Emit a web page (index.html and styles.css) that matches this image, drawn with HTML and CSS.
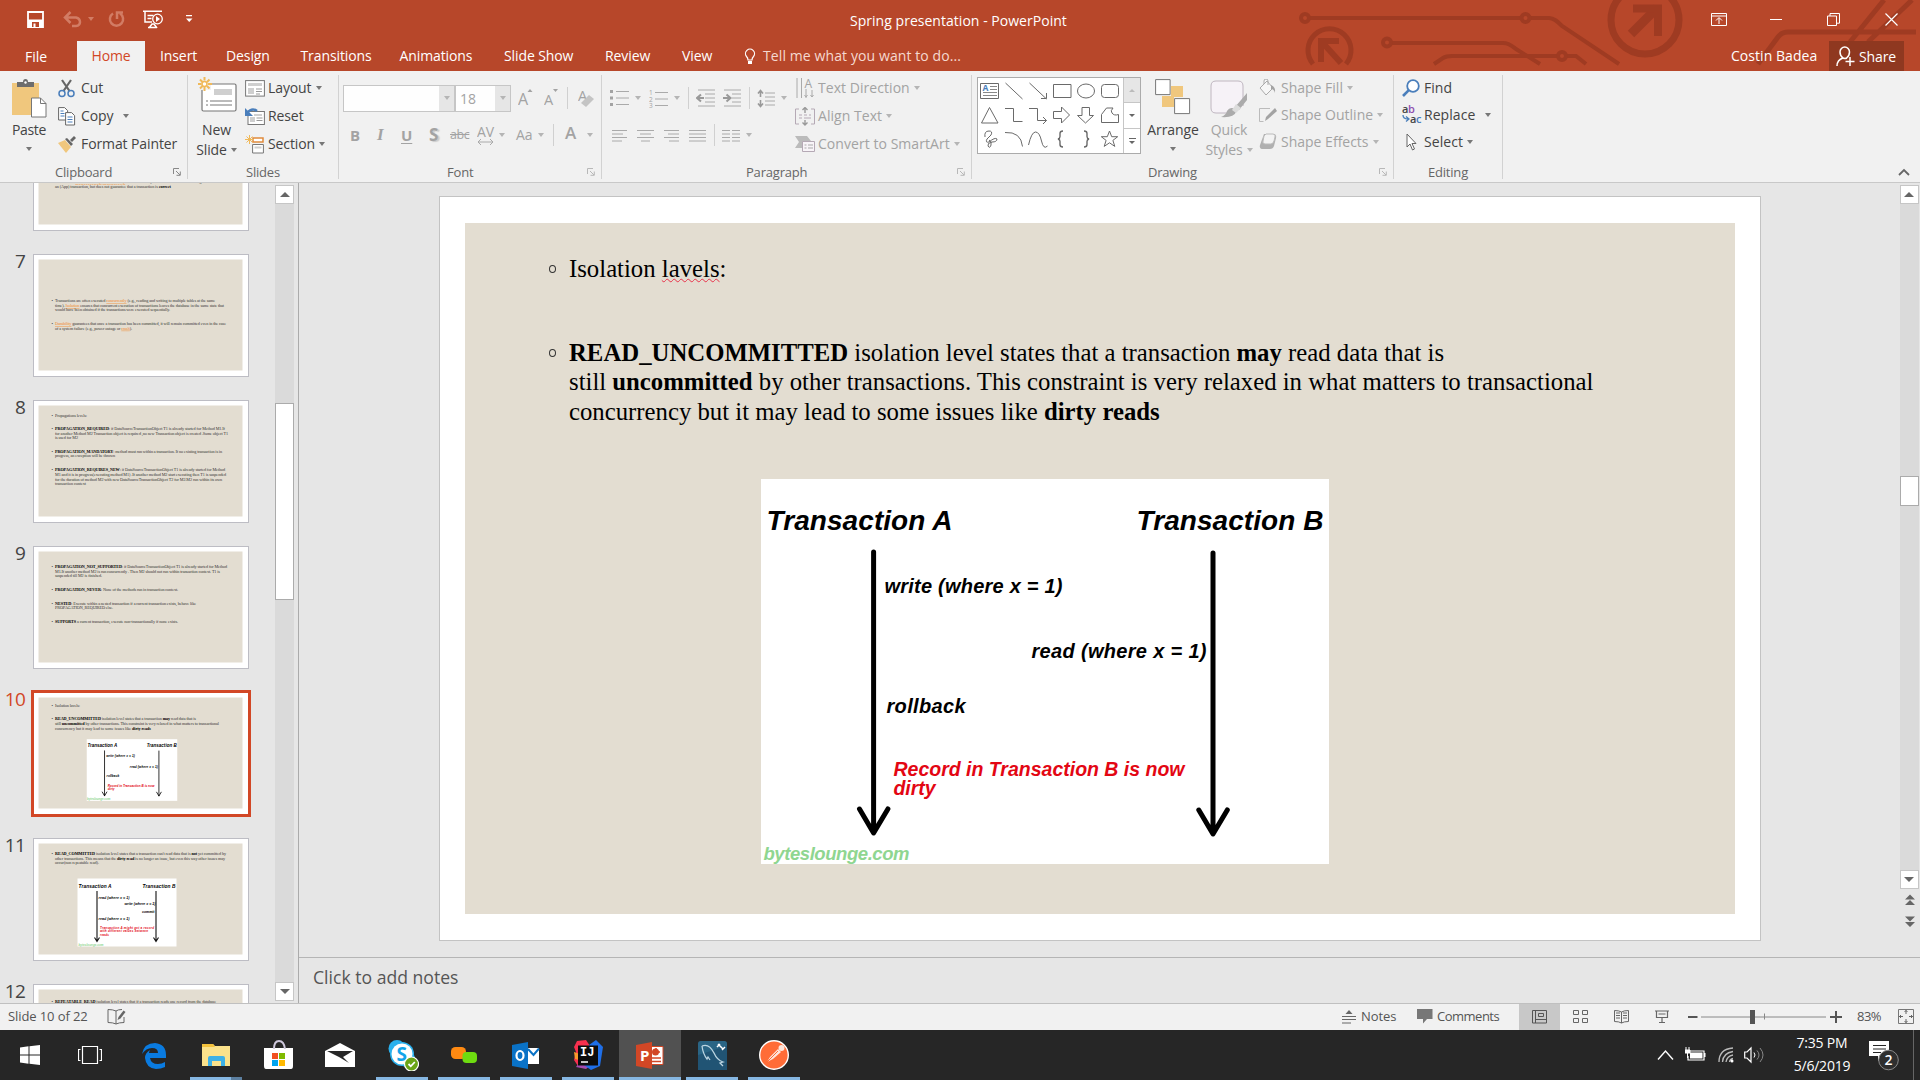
FILE: index.html
```html
<!DOCTYPE html>
<html lang="en">
<head>
<meta charset="utf-8">
<title>Spring presentation - PowerPoint</title>
<link rel="stylesheet" href="styles.css">
</head>
<body>
<svg class="defs" width="0" height="0">
  <defs>
    <symbol id="launcher" viewBox="0 0 8 8"><path d="M.5 6V.5H6M3 3l4 4M7.3 3.5v3.8H3.5" fill="none" stroke="currentColor"/></symbol>
    <symbol id="diagram" viewBox="0 0 568 385">
      <rect width="568" height="385" fill="#fff"/>
      <g fill="none" stroke="#000" stroke-width="5" stroke-linecap="round" stroke-linejoin="round">
        <path d="M112.6 73v280M98.5 330l14.1 24 14.3-24"/>
        <path d="M452 74v280M437.8 331l14.2 24 14.3-24"/>
      </g>
      <g class="dg">
        <text x="5.5" y="51" font-size="28" textLength="186">Transaction A</text>
        <text x="375.5" y="51" font-size="28" textLength="187">Transaction B</text>
        <text x="123.5" y="113.500" font-size="20" textLength="178">write (where x = 1)</text>
        <text x="270.5" y="179" font-size="20" textLength="175">read (where x = 1)</text>
        <text x="125.500" y="233.500" font-size="20" textLength="79">rollback</text>
        <text x="132.500" y="297" font-size="19.500" textLength="291" fill="#e30613">Record in Transaction B is now</text>
        <text x="132.500" y="315.500" font-size="19.500" textLength="42" fill="#e30613">dirty</text>
        <text x="2.500" y="381" font-size="18.500" textLength="146" fill="#8fd690">byteslounge.com</text>
      </g>
    </symbol>
  </defs>
</svg>
<div class="app">
  <header class="top">
    <svg class="circuit" width="660" height="71" viewBox="1260 0 660 71">
      <g fill="none" stroke="#9f3b22" stroke-width="4">
        <path d="M1310 18h212M1529 18h20c5 0 9 4 13 8l57 38M1391 43h112c6 0 9 3 13 6l24 15M1434 64l9-6c3-2 6-2 9-2h106M1566 56h10l10 8"/>
        <circle cx="1305" cy="18" r="4"/><circle cx="1525.500" cy="18" r="4"/><circle cx="1387" cy="42.500" r="4"/><circle cx="1562" cy="56" r="4"/>
        <path d="M1758 64l20-27c3-4 6-5 10-5h128M1850 42l34-42M1868 42l44-42" stroke-width="5"/>
        <path d="M1313 64a21.500 21.500 0 1 1 33 0" stroke-width="5"/>
        <circle cx="1645" cy="20" r="34" stroke-width="7"/>
        <path d="M1341 63l-19-21" stroke-width="6"/><path d="M1321 62V41h18" stroke-width="6"/>
        <path d="M1631 34l26-26" stroke-width="9"/><path d="M1633 8.500h25V36" stroke-width="8"/>
      </g>
    </svg>
    <div class="titlebar">
      <div class="qat">
        <svg width="17" height="17" viewBox="0 0 17 17"><path d="M1 1h15v15H1z" fill="none" stroke="#fff" stroke-width="1.800"/><path d="M1 8.500h15V16H1z" fill="#fff"/><path d="M5 11h7v5H5z" fill="#b7472a"/><path d="M6.500 12.500h2V16h-2z" fill="#fff"/></svg>
        <svg width="19" height="17" viewBox="0 0 19 17"><path d="M2 6.500h11q4 1 4 4.500t-4 4H9M7.500 1L2 6.500 7.500 12" fill="none" stroke="#d27c64" stroke-width="2.500"/></svg>
        <i class="caret pale"></i>
        <svg width="19" height="18" viewBox="0 0 19 18"><path d="M6 3.500a6.600 6.600 0 1 0 7 0M10 9V2.500h6" fill="none" stroke="#d27c64" stroke-width="2.500"/></svg>
        <svg width="21" height="19" viewBox="0 0 21 19"><path d="M0 1.200h19M2 2v10h7M4.500 5.500h6M4.500 8.500h4M6 18l3-4h2l3 4M5 17.500h8" fill="none" stroke="#fff" stroke-width="1.500"/><circle cx="14.500" cy="9" r="4.800" fill="#b7472a" stroke="#fff" stroke-width="1.300"/><path d="M13 6l4 3-4 3z" fill="#fff"/></svg>
        <svg width="7" height="8" viewBox="0 0 7 8"><path d="M0 0h6v1.200H0zM0 3.500h6.500L3.200 7z" fill="#fff"/></svg>
      </div>
      <div class="doc-title">Spring presentation - PowerPoint</div>
      <div class="winbtns">
        <svg width="17" height="13" viewBox="0 0 17 13"><path d="M.5.500h15v12H.5zM.5 3h15M8 11V5M5 7.500l3-3 3 3" fill="none" stroke="#fff"/></svg>
        <svg width="13" height="13" viewBox="0 0 13 13"><path d="M0 6.500h12" stroke="#fff"/></svg>
        <svg width="13" height="13" viewBox="0 0 13 13"><path d="M.5 3h9v9.500h-9zM3 3V.5h9.500v9.700h-3" fill="none" stroke="#fff"/></svg>
        <svg width="13" height="13" viewBox="0 0 13 13"><path d="M.5.500l12 12M12.500.500l-12 12" stroke="#fff" stroke-width="1.200"/></svg>
      </div>
    </div>
    <nav class="tabs">
      <span class="file">File</span><span class="tab-on">Home</span><span>Insert</span><span>Design</span><span>Transitions</span><span>Animations</span><span>Slide Show</span><span>Review</span><span>View</span>
      <svg width="12" height="17" viewBox="0 0 12 17"><path d="M4 12q0-2-1.500-3.500a4.500 4.500 0 1 1 7 0Q8 10 8 12z" fill="none" stroke="#fff" stroke-width="1.200"/><path d="M4 13h4v3H4z" fill="#fff"/></svg>
      <span class="tell">Tell me what you want to do...</span>
      <span class="user">Costin Badea</span>
      <span class="share"><svg width="19" height="21" viewBox="0 0 19 21"><path d="M1 20q0-6 6-8-3-2-3-6a4.700 5 0 0 1 9.500 0q0 4-3 6M7 12q2 1 4 0M14 11v9M9.500 15.500h9" fill="none" stroke="#fff" stroke-width="1.500"/></svg>Share</span>
    </nav>
  </header>

  <section class="ribbon">
    <div class="group g-clip">
      <div class="body">
        <div class="big b-paste">
          <svg width="35" height="39" viewBox="0 0 35 39"><path d="M0 4h27v32H0z" fill="#f0c77d"/><path d="M5 3h6q0-3 2.500-3T16 3h6v5H5z" fill="#6d6d6d"/><circle cx="13.500" cy="3.500" r="1.200" fill="#fff"/><path d="M19.500 19h9l5.500 5.500V38H19.500z" fill="#fff" stroke="#777"/><path d="M28.500 19v5.500H34" fill="none" stroke="#777"/></svg>
          <span>Paste</span><i class="caret"></i>
        </div>
        <div class="list">
          <div><svg width="17" height="19" viewBox="0 0 17 19"><path d="M4 1l7.500 11M13 1L5.500 12" stroke="#666" stroke-width="2.200"/><circle cx="4" cy="14.500" r="3" fill="none" stroke="#4a7ebb" stroke-width="1.500"/><circle cx="13" cy="14.500" r="3" fill="none" stroke="#4a7ebb" stroke-width="1.500"/></svg>Cut</div>
          <div><svg width="18" height="19" viewBox="0 0 18 19"><path d="M.6.600h6l3 3V13h-9z" fill="#fff" stroke="#666"/><path d="M2.500 4h3M2.500 6.500h4M2.500 9h4" stroke="#4a7ebb"/><path d="M7.600 5.600h6l3 3V18h-9z" fill="#fff" stroke="#666"/><path d="M9.500 10h5M9.500 12.500h5M9.500 15h5" stroke="#4a7ebb"/></svg>Copy<i class="caret m10"></i></div>
          <div><svg width="18" height="17" viewBox="0 0 18 17"><path d="M0 7l7-3 6 7-5 6z" fill="#f0c77d"/><path d="M7 3l2-1 6 6-2 2zM12 4l4-4 2 2-4 4z" fill="#666"/></svg>Format Painter</div>
        </div>
      </div>
      <div class="cap"><span>Clipboard</span><svg class="ln"><use href="#launcher"/></svg></div>
    </div>

    <div class="group g-slides">
      <div class="body">
        <div class="big b-new">
          <svg width="39" height="35" viewBox="0 0 39 35"><rect x="4" y="7" width="34" height="27" rx="1.500" fill="#fff" stroke="#777" stroke-width="1.200"/><path d="M16 12h18v6H16z" fill="#cfcfcf"/><path d="M8 24h2M12 24h22M8 28h2M12 28h22" stroke="#777"/><path d="M6 1h7v12H1V1z" fill="#f1f1f1"/><g stroke="#f0b95a" stroke-width="2"><path d="M6.500 0v3.500M6.500 10v4M0 7h3.500M10 7h4M2 2.500l2.500 2.500M9 9l2.500 2.500M11.500 2.500L9 5M4.500 9L2 11.500"/></g><circle cx="6.500" cy="7" r="2.500" fill="#fff" stroke="#f0b95a" stroke-width="1.500"/></svg>
          <span>New</span><span class="ln2">Slide<i class="caret"></i></span>
        </div>
        <div class="list">
          <div><svg width="20" height="17" viewBox="0 0 20 17"><rect x=".6" y=".6" width="18.800" height="15.500" fill="#fff" stroke="#777"/><path d="M3 3h14v3H3zM3 8h6v6H3z" fill="#cfcfcf"/><path d="M11 9h6M11 11.500h6M11 14h4" stroke="#999"/></svg>Layout<i class="caret m4"></i></div>
          <div><svg width="20" height="17" viewBox="0 0 20 17"><rect x="3" y="3.500" width="16.400" height="13" fill="#fff" stroke="#777"/><path d="M9 6h8v2H9zM5 9h5v5H5z" fill="#cfcfcf"/><path d="M11.500 10h6M11.500 12.500h6" stroke="#999"/><path d="M2 5q5-6 10-2" fill="none" stroke="#4a7ebb" stroke-width="2.400"/><path d="M0 0v8h8z" fill="#4a7ebb"/></svg>Reset</div>
          <div><svg width="20" height="19" viewBox="0 0 20 19"><path d="M8 3h10v4H8z" fill="#fff" stroke="#e08a3c" stroke-width="1.500"/><path d="M7.600 9.500h10.800v8.500H7.600z" fill="#fff" stroke="#777"/><path d="M9.500 11.500h7v2h-7z" fill="#cfcfcf"/><path d="M4.500 0v9M0 4.500h9M1.500 1.500l6 6M7.500 1.500l-6 6" stroke="#f0b95a"/></svg>Section<i class="caret m4"></i></div>
        </div>
      </div>
      <div class="cap"><span>Slides</span></div>
    </div>

    <div class="group g-font off">
      <div class="body rows">
        <div class="frow1">
          <div class="combo"><b></b><em><i class="caret"></i></em></div>
          <div class="combo"><b>18</b><em><i class="caret"></i></em></div>
          <svg width="16" height="20" viewBox="0 0 16 20"><text x="0" y="17" font-size="16">A</text><path d="M9.500 4l2.500-3 2.500 3z"/></svg>
          <svg width="16" height="20" viewBox="0 0 16 20"><text x="0" y="17" font-size="14.500">A</text><path d="M9 1l2.500 3L14 1z"/></svg>
          <i class="vr"></i>
          <svg width="17" height="20" viewBox="0 0 17 20"><text x="0" y="13" font-size="14.500">A</text><path d="M3 15l8-8 5 4-8 8z" fill="#c4c4c4"/></svg>
        </div>
        <div class="frow2">
          <span class="fb">B</span><span class="fi">I</span><span class="fu">U</span><span class="fs">S</span><span class="fx">abc</span>
          <svg width="19" height="20" viewBox="0 0 19 20"><text x="0" y="12" font-size="14" textLength="17">AV</text><path d="M1 17h15M4 14l-3 3 3 3M13 14l3 3-3 3" fill="none" stroke="#aaa"/></svg>
          <i class="caret"></i><span>Aa</span><i class="caret"></i><i class="vr"></i><span class="fa">A</span><i class="caret"></i>
        </div>
      </div>
      <div class="cap"><span>Font</span><svg class="ln"><use href="#launcher"/></svg></div>
    </div>

    <div class="group g-para off">
      <div class="body">
        <div class="rows p-left">
          <div class="prow1">
            <svg width="19" height="18" viewBox="0 0 19 18"><path d="M0 1h3v3H0zM0 7.500h3v3H0zM0 14h3v3H0z"/><path d="M6 2.500h13M6 9h13M6 15.500h13" stroke="#aaa"/></svg><i class="caret"></i>
            <svg width="19" height="19" viewBox="0 0 19 19"><text x="0" y="6" font-size="6.500">1</text><text x="0" y="12.500" font-size="6.500">2</text><text x="0" y="19" font-size="6.500">3</text><path d="M6 3.500h13M6 10h13M6 16.500h13" stroke="#aaa"/></svg><i class="caret"></i>
            <i class="vr"></i>
            <svg width="19" height="18" viewBox="0 0 19 18"><path d="M2 1h17M9 5h10M9 9h10M9 13h10M2 17h17" stroke="#aaa"/><path d="M1 9h7M5 5.500L1 9l4 3.500" fill="none" stroke="#999" stroke-width="2"/></svg>
            <svg width="19" height="18" viewBox="0 0 19 18"><path d="M1 1h17M9 5h9M9 9h9M9 13h9M1 17h17" stroke="#aaa"/><path d="M0 9h7M3.500 5.500L7.500 9l-4 3.500" fill="none" stroke="#999" stroke-width="2"/></svg>
            <i class="vr"></i>
            <svg width="18" height="19" viewBox="0 0 18 19"><path d="M3.500 2v6M3.500 11v6M1 4.500L3.500 1.500 6 4.500M1 14.500l2.500 3 2.500-3" fill="none" stroke="#999" stroke-width="1.600"/><path d="M8 4h10M8 8h10M8 12h10M8 16h10" stroke="#aaa"/></svg><i class="caret"></i>
          </div>
          <div class="prow2">
            <svg width="15" height="13" viewBox="0 0 15 13"><path d="M0 1.500h15M0 5h11M0 8.500h15M0 12h10" stroke="#aaa"/></svg>
            <svg width="17" height="13" viewBox="0 0 17 13"><path d="M0 1.500h17M3 5h11M0 8.500h17M4 12h9" stroke="#aaa"/></svg>
            <svg width="15" height="13" viewBox="0 0 15 13"><path d="M0 1.500h15M4 5h11M0 8.500h15M5 12h10" stroke="#aaa"/></svg>
            <svg width="17" height="13" viewBox="0 0 17 13"><path d="M0 1.500h17M0 5h17M0 8.500h17M0 12h17" stroke="#aaa"/></svg>
            <i class="vr"></i>
            <svg width="18" height="13" viewBox="0 0 18 13"><path d="M0 1.500h8M10 1.500h8M0 5h8M10 5h8M0 8.500h8M10 8.500h8M0 12h8M10 12h8" stroke="#aaa"/></svg><i class="caret"></i>
          </div>
        </div>
        <div class="list">
          <div><svg width="20" height="20" viewBox="0 0 20 20"><path d="M2 0v20M6.500 0v20M11 11v9M17 12v7M9.500 17l1.500 2 1.500-2M15.500 17l1.500 2 1.500-2" fill="none" stroke="#aaa"/><text x="9.500" y="10" font-size="12">A</text></svg>Text Direction<i class="caret m4"></i></div>
          <div><svg width="20" height="19" viewBox="0 0 20 19"><path d="M4 2H.5v15H4M16 2h3.500v15H16M4 8h3M9 8h3M14 8h2M4 11h3M9 11h7" fill="none" stroke="#b5a9b5"/><path d="M10 0v6M10 13v5M7.500 3L10 .5 12.500 3M7.500 15.500L10 18l2.500-2.500" fill="none" stroke="#999" stroke-width="1.400"/></svg>Align Text<i class="caret m4"></i></div>
          <div><svg width="20" height="17" viewBox="0 0 20 17"><path d="M0 0h12l4 5H8v7H0l4-6z" fill="#bbb"/><path d="M7.500 5.500h12v10h-12z" fill="#f8f4f8" stroke="#b5a9b5"/><path d="M9.500 9h2M13 9h5M9.500 12h2M13 12h5" stroke="#aaa"/></svg>Convert to SmartArt<i class="caret m4"></i></div>
        </div>
      </div>
      <div class="cap"><span>Paragraph</span><svg class="ln"><use href="#launcher"/></svg></div>
    </div>

    <div class="group g-draw">
      <div class="body">
        <div class="gallery">
          <svg width="146" height="74" viewBox="978 78 146 74" fill="none" stroke="#6a6a6a">
            <path d="M980.500 83.500h18v15h-18z"/><path d="M990 86.500h7M990 89.500h7M983 92.500h14M983 95.500h14" stroke="#888"/><text x="982.500" y="91" font-size="8.500" font-weight="700" fill="#4a7ebb" stroke="none">A</text>
            <path d="M1005.500 83l17 16M1029.500 83l17 16M1041 98.500h5.500V93M1053.500 84.500h17.500v13h-17.500z"/>
            <ellipse cx="1086" cy="91" rx="8.500" ry="7"/><rect x="1101.500" y="84.500" width="17" height="13" rx="3"/>
            <path d="M989.500 107.500l8.500 15.500h-16.500zM1005 108.500h8.500v13h9M1029 108.500h8.500v12h9M1043 117l3.500 3.500-3.500 3.500M1053.500 111.500h8v-4.500l8 8-8 8v-4.500h-8zM1082 107.500h7.500v8h4l-8 7.500-8-7.500h4.500zM1101.500 122.500v-8l5-6.500h6.500q-3 3-1 5 2 3 6.500 1.500v8z"/>
            <path d="M985 137q-1-6 4-6 4 0 2 4l-4 4q-2 4 2 3 6-5 8-3 0 3-5 3-5 1-4 4 2 3 3-1 1-4-2-5M1005 132.500q16-1 17.500 14M1028.500 145q3-13 7-13t6 9 6 5"/>
            <path d="M1063 131q-3 0-3 2.500v3q0 2-2 2.500 2 .5 2 2.500v3q0 2.500 3 2.500M1084 131q3 0 3 2.500v3q0 2 2 2.500-2 .5-2 2.500v3q0 2.500-3 2.500" stroke-width="1.400"/>
            <path d="M1109.500 131l2.200 5.700h6l-4.800 3.700 1.900 6-5.300-3.600-5.300 3.600 1.900-6-4.800-3.700h6z"/>
          </svg>
          <div class="gscroll"><i><u class="up pale2"></u></i><i><u class="dn"></u></i><i><s></s><u class="dn"></u></i></div>
        </div>
        <div class="big b-arr">
          <svg width="36" height="37" viewBox="0 0 36 37"><path d="M16 8h12v11H16zM7 18h12v11H7z" fill="#f0c77d"/><path d="M.6 1.600h14.500v15H.6zM19.600 20.600h15v15h-15z" fill="#fff" stroke="#777"/></svg>
          <span>Arrange</span><i class="caret"></i>
        </div>
        <div class="big b-quick off">
          <svg width="38" height="38" viewBox="0 0 38 38"><path d="M24 33H6q-5 0-5-5V6q0-5 5-5h22q5 0 5 5v20" fill="#f6f2f7" stroke="#bfb6c0"/><path d="M37 13v7l-8 10-4-3zM11 37q5-2 6-6 3-5 8-2l1 3q-2 6-15 5z" fill="#ababab"/><path d="M22 30l4-6 5 4-5 5z" fill="#dcdcdc"/></svg>
          <span>Quick</span><span class="ln2">Styles<i class="caret"></i></span>
        </div>
        <div class="list off l27">
          <div><svg width="17" height="18" viewBox="0 0 17 18"><path d="M1 9l7-7 6 7-7 7zM5 5V2q0-2 2-2t2 2v4" fill="#f6f6f6" stroke="#aaa"/><path d="M12 6q5 2 4 8-1-4-4-4z"/></svg>Shape Fill<i class="caret m4"></i></div>
          <div><svg width="19" height="16" viewBox="0 0 19 16"><path d="M11 1.500H.5v13h4" fill="none" stroke="#bbb"/><path d="M6 14l1-4 9-9 2 3-9 8z"/></svg>Shape Outline<i class="caret m4"></i></div>
          <div><svg width="18" height="17" viewBox="0 0 18 17"><path d="M5 1h9q4 0 3 4l-2 8q-1 3-4 3H4q-4 0-3-4z" fill="#b0b0b0"/><path d="M7 1h7q3 0 2 3l-1 4q-1 3-3 3H6q-3 0-2-3l1-5z" fill="#f3f3f3" stroke="#bbb"/></svg>Shape Effects<i class="caret m4"></i></div>
        </div>
      </div>
      <div class="cap"><span>Drawing</span><svg class="ln pale-ln"><use href="#launcher"/></svg></div>
    </div>

    <div class="group g-edit">
      <div class="body">
        <div class="list l27">
          <div><svg width="19" height="18" viewBox="0 0 19 18"><circle cx="11" cy="7" r="5.800" fill="#fff" stroke="#4a7ebb" stroke-width="1.800"/><path d="M6.800 11.200L1 17" stroke="#4a7ebb" stroke-width="2.600"/></svg>Find</div>
          <div><svg width="20" height="19" viewBox="0 0 20 19"><g font-weight="600"><text x="0" y="8" font-size="11" fill="#444">a</text><text x="6" y="8" font-size="11" fill="#8f4fb0">b</text><text x="8" y="18" font-size="11" fill="#444">a</text><text x="14" y="18" font-size="11" fill="#4a7ebb">c</text></g><path d="M1 10q0 4 5 4M4 11.500L7 14l-3 2.500" fill="none" stroke="#4a7ebb" stroke-width="1.300"/></svg>Replace<i class="caret m10"></i></div>
          <div><svg width="17" height="18" viewBox="0 0 17 18"><path d="M5 1v13l3-3 2.500 6 2-1L10 10.500h4z" fill="#fff" stroke="#666"/></svg>Select<i class="caret m4"></i></div>
        </div>
      </div>
      <div class="cap"><span>Editing</span></div>
    </div>
    <svg class="collapse" width="12" height="8" viewBox="0 0 12 8"><path d="M1 7l5-5 5 5" fill="none" stroke="#666" stroke-width="1.800"/></svg>
  </section>

  <main class="work">
    <aside class="pane">
      <ol class="thumbs">
        <li><span></span><svg viewBox="0 0 216 123"><rect class="pg" x="5.500" y="5.500" width="204" height="111"/>
          <text x="22" y="75" textLength="175">and then <tspan class="hl">Consistency Durability</tspan> ensures any transaction will bring the database</text><text x="22" y="80" textLength="116">an (App) transaction, but does not guarantee that a transaction is <tspan class="bd">correct</tspan></text></svg></li>
        <li><span>7</span><svg viewBox="0 0 216 123"><rect class="pg" x="5.500" y="5.500" width="204" height="111"/>
          <text x="18.500" y="48">•</text><text x="22" y="48" textLength="160">Transactions are often executed <tspan class="hl">concurrently</tspan> (e.g., reading and writing to multiple tables at the same</text><text x="22" y="53" textLength="169">time). <tspan class="hl">Isolation</tspan> ensures that concurrent execution of transactions leaves the database in the same state that</text><text x="22" y="57" textLength="115">would have been obtained if the transactions were executed sequentially.</text>
          <text x="18.500" y="71">•</text><text x="22" y="71" textLength="171"><tspan class="hl">Durability</tspan> guarantees that once a transaction has been committed, it will remain committed even in the case</text><text x="22" y="75.700" textLength="77">of a system failure (e.g., power outage or <tspan class="hl">crash</tspan>).</text></svg></li>
        <li><span>8</span><svg viewBox="0 0 216 123"><rect class="pg" x="5.500" y="5.500" width="204" height="111"/>
          <text x="18.500" y="17">•</text><text x="22" y="17" textLength="32">Propagations levels:</text>
          <text x="18.500" y="30">•</text><text x="22" y="30" textLength="170"><tspan class="bd">PROPAGATION_REQUIRED</tspan>: if DataSourceTransactionObject T1 is already started for Method M1.If</text><text x="22" y="34.700" textLength="173">for another Method M2 Transaction object is required ,no new Transaction object is created .Same object T1</text><text x="22" y="38.700" textLength="23">is used for M2</text>
          <text x="18.500" y="53">•</text><text x="22" y="53" textLength="167"><tspan class="bd">PROPAGATION_MANDATORY</tspan>: method must run within a transaction. If no existing transaction is in</text><text x="22" y="57" textLength="60">progress, an exception will be thrown</text>
          <text x="18.500" y="71">•</text><text x="22" y="71" textLength="170"><tspan class="bd">PROPAGATION_REQUIRES_NEW</tspan>: if DataSourceTransactionObject T1 is already started for Method</text><text x="22" y="76" textLength="171">M1 and it is in progress(executing method M1) .If another method M2 start executing then T1 is suspended</text><text x="22" y="80.700" textLength="167">for the duration of method M2 with new DataSourceTransactionObject T2 for M2.M2 run within its own</text><text x="22" y="84.700" textLength="31">transaction context</text></svg></li>
        <li><span>9</span><svg viewBox="0 0 216 123"><rect class="pg" x="5.500" y="5.500" width="204" height="111"/>
          <text x="18.500" y="21.700">•</text><text x="22" y="21.700" textLength="172"><tspan class="bd">PROPAGATION_NOT_SUPPORTED</tspan>: if DataSourceTransactionObject T1 is already started for Method</text><text x="22" y="26.700" textLength="165">M1.If another method M2 is run concurrently . Then M2 should not run within transaction context. T1 is</text><text x="22" y="30.700" textLength="47">suspended till M2 is finished.</text>
          <text x="18.500" y="45">•</text><text x="22" y="45" textLength="123"><tspan class="bd">PROPAGATION_NEVER</tspan>: None of the methods run in transaction context.</text>
          <text x="18.500" y="59">•</text><text x="22" y="59" textLength="141"><tspan class="bd">NESTED</tspan>: Execute within a nested transaction if a current transaction exists, behave like</text><text x="22" y="63" textLength="58">PROPAGATION_REQUIRED else.</text>
          <text x="18.500" y="77">•</text><text x="22" y="77" textLength="123"><tspan class="bd">SUPPORTS</tspan> a current transaction, execute non-transactionally if none exists.</text></svg></li>
        <li class="sel"><span>10</span><svg viewBox="0 0 216 123"><rect class="pg" x="5.500" y="5.500" width="204" height="111"/>
          <text x="18.500" y="14.700">•</text><text x="22" y="14.700" textLength="25">Isolation lavels:</text>
          <text x="18.500" y="27.700">•</text><text x="22" y="27.700" textLength="141"><tspan class="bd">READ_UNCOMMITTED</tspan> isolation level states that a transaction <tspan class="bd">may</tspan> read data that is</text><text x="22" y="32.700" textLength="164">still <tspan class="bd">uncommitted</tspan> by other transactions. This constraint is very relaxed in what matters to transactional</text><text x="22" y="38" textLength="96">concurrency but it may lead to some issues like <tspan class="bd">dirty reads</tspan></text>
          <use href="#diagram" x="53.500" y="47" width="91" height="62"/></svg></li>
        <li><span>11</span><svg viewBox="0 0 216 123"><rect class="pg" x="5.500" y="5.500" width="204" height="111"/>
          <text x="18.500" y="17">•</text><text x="22" y="17" textLength="171"><tspan class="bd">READ_COMMITTED</tspan> isolation level states that a transaction can't read data that is <tspan class="bd">not</tspan> yet committed by</text><text x="22" y="22" textLength="170">other transactions. This means that the <tspan class="bd">dirty read</tspan> is no longer an issue, but even this way other issues may</text><text x="22" y="26" textLength="44">occur(non repeatable read).</text>
          <rect x="44.500" y="40.500" width="99" height="68" fill="#fff"/>
          <path d="M64 53v50M61.500 99.500l2.500 4 2.500-4M123 53v50M120.500 99.500l2.500 4 2.500-4" fill="none" stroke="#111" stroke-width="1.100"/>
          <g class="dg"><text x="45.500" y="49.500" font-size="4.800" textLength="33">Transaction A</text><text x="109.500" y="49.500" font-size="4.800" textLength="33">Transaction B</text><text x="65.500" y="60.500" font-size="3.600" textLength="31">read (where x = 1)</text><text x="91.500" y="67" font-size="3.600" textLength="31">write (where x = 1)</text><text x="109" y="74.500" font-size="3.600" textLength="12.500">commit</text><text x="65.500" y="82" font-size="3.600" textLength="31">read (where x = 1)</text>
          <g fill="#e30613"><text x="67" y="90.500" font-size="3" textLength="54">Transaction A might get a record</text><text x="67" y="94.200" font-size="3" textLength="48">with different values between</text><text x="67" y="97.900" font-size="3" textLength="9">reads</text></g><text x="45.500" y="107.700" font-size="3" textLength="25" fill="#8fd690">byteslounge.com</text></g></svg></li>
        <li><span>12</span><svg viewBox="0 0 216 123"><rect class="pg" x="5.500" y="5.500" width="204" height="111"/><text x="18.500" y="18.700">•</text><text x="22" y="18.700" textLength="161"><tspan class="bd">REPEATABLE_READ</tspan> isolation level states that if a transaction reads one record from the database</text></svg></li>
      </ol>
      <div class="sbar"><b><u class="up"></u></b><div class="track t-left"><em></em></div><b><u class="dn"></u></b></div>
    </aside>
    <div class="right">
      <div class="stage">
        <article class="slide">
          <div class="page">
            <ul>
              <li>Isolation <span class="wavy">lavels</span>:</li>
              <li class="p2"><strong>READ_UNCOMMITTED</strong> isolation level states that a transaction <strong>may</strong> read data that is<br>still <strong>uncommitted</strong> by other transactions. This constraint is very relaxed in what matters to transactional<br>concurrency but it may lead to some issues like <strong>dirty reads</strong></li>
            </ul>
            <svg class="figure" width="568" height="385"><use href="#diagram"/></svg>
          </div>
        </article>
        <div class="vscroll">
          <div class="sbar"><b><u class="up"></u></b><div class="track t-main"><em></em></div><b><u class="dn"></u></b></div>
          <svg width="12" height="12" viewBox="0 0 12 12"><path d="M1 5.500L6 .5l5 5zM1 11l5-5 5 5z" fill="#666"/></svg>
          <svg width="12" height="12" viewBox="0 0 12 12"><path d="M1 .500h10l-5 5zM1 6h10l-5 5z" fill="#666"/></svg>
        </div>
      </div>
      <div class="notes">Click to add notes</div>
    </div>
  </main>

  <footer class="status">
    <span class="s-slide">Slide 10 of 22</span>
    <svg width="19" height="18" viewBox="0 0 19 18"><path d="M9 3Q6 1.500 1 1.500v13q5 0 8 1.500zM9 3q2-1.500 6-1.500M9 16q3-1.500 8-1.500V9" fill="none" stroke="#666"/><path d="M10.500 12l1-3L16.500 2.500l2 1.500-5 6.500z" fill="#666"/></svg>
    <svg class="s-ni" width="14" height="14" viewBox="0 0 14 14"><path d="M3.500 4L7 0l3.500 4z" fill="#666"/><path d="M0 6.500h14M0 9.500h14M0 13h9" stroke="#666" stroke-width="1.200"/></svg>
    <span>Notes</span>
    <svg width="16" height="15" viewBox="0 0 16 15"><path d="M0 0h15.500v10H10l-4 4.500V10H0z" fill="#777"/></svg>
    <span class="s-com">Comments</span>
    <div class="view-on"><svg width="15" height="14" viewBox="0 0 15 14"><path d="M.5.500h14v12.500H.5zM3.500.500v12.500M3.500 9.500h11M6.500 3.500h5v3h-5z" fill="none" stroke="#555"/></svg></div>
    <svg width="15" height="14" viewBox="0 0 15 14"><path d="M.5.500h5v4h-5zM9.500.500h5v4h-5zM.5 8.500h5v4h-5zM9.500 8.500h5v4h-5z" fill="none" stroke="#666"/></svg>
    <svg width="15" height="14" viewBox="0 0 15 14"><path d="M7.500 2Q5 .5.500.500v11q4.500 0 7 1.500 2.500-1.500 7-1.500V.5q-4.500 0-7 1.500zM7.500 2v11M2 3h4M2 5.500h4M2 8h4M9 3h4M9 5.500h4M9 8h4" fill="none" stroke="#666"/></svg>
    <svg width="14" height="14" viewBox="0 0 14 14"><path d="M0 1h14M1.500 1v6.500h11V1M7 8v4M4 12.500h6M3.500 4h7" fill="none" stroke="#666" stroke-width="1.200"/></svg>
    <svg width="10" height="14" viewBox="0 0 10 14"><path d="M0 7h9.500" stroke="#555" stroke-width="2"/></svg>
    <svg width="126" height="16" viewBox="0 0 126 16"><path d="M0 8h125M63.500 4.500v6" stroke="#888"/><path d="M49 1h5v14h-5z" fill="#555"/></svg>
    <svg width="12" height="14" viewBox="0 0 12 14"><path d="M0 7h12M6 1v12" stroke="#555" stroke-width="2"/></svg>
    <span class="s-z">83%</span>
    <svg width="16" height="17" viewBox="0 0 16 17"><path d="M.5 1.500h15v14H.5z" fill="none" stroke="#777"/><path d="M8 2v4M8 11v4M1 8.500h4M11 8.500h4M6.500 4L8 2.500 9.500 4M6.500 13L8 14.500 9.500 13M3 7L1.500 8.500 3 10M13 7l1.500 1.500L13 10" fill="none" stroke="#666"/></svg>
  </footer>

  <footer class="taskbar">
    <div class="tk w60"><svg width="20" height="20" viewBox="0 0 20 20"><path d="M0 2.500L8.500 1.300V9.500H0zM9.500 1.200L20 0v9.500H9.500zM0 10.500h8.500v8.200L0 17.500zM9.500 10.500H20V20L9.500 18.800z" fill="#fff"/></svg></div>
    <div class="tk w63"><svg width="24" height="18" viewBox="0 0 24 18"><path d="M4.500.500h15v17h-15zM2.500 3.500H.5v11h2M21.500 3.500h2v11h-2" fill="none" stroke="#fff" stroke-width="1.200"/></svg></div>
    <div class="tk"><svg width="26" height="27" viewBox="0 0 26 27"><path d="M1 12Q3 1 14 1q11 1 11 12v3H9q1 6 8 6 4 0 7-2v5q-4 2-9 2-10-1-11-11 0-5 5-8-1 2-1 3h9q0-5-6-5Q5 6 1 12z" fill="#0a7be0"/></svg></div>
    <div class="tk run two"><svg width="28" height="24" viewBox="0 0 28 24"><path d="M0 1h11l2 2h15v20H0z" fill="#fbe28b"/><path d="M0 1h11l2 3H0z" fill="#f4c23c"/><path d="M6 23v-8q0-2 2-2h13q2 0 2 2v8h-4v-5h-9v5z" fill="#3eb1e6"/></svg></div>
    <div class="tk"><svg width="29" height="30" viewBox="0 0 29 30"><path d="M0 8h29v18q0 3-2 3H2q-2 0-2-3z" fill="#fff"/><path d="M10 9q0-8 5-8t6 8" fill="none" stroke="#cfc8dc" stroke-width="2"/><path d="M8 13h6v6H8z" fill="#f25022"/><path d="M15 13h6v6h-6z" fill="#7fba00"/><path d="M8 20h6v6H8z" fill="#00a4ef"/><path d="M15 20h6v6h-6z" fill="#ffb900"/></svg></div>
    <div class="tk"><svg width="30" height="24" viewBox="0 0 30 24"><path d="M0 8L15 0l15 8v16H0z" fill="#fff"/><path d="M2 8h26l-10 6 6 6-10-6z" fill="#262626"/></svg></div>
    <div class="tk run"><svg class="nudge" width="31" height="31" viewBox="0 0 31 31"><circle cx="9" cy="8.500" r="8.500" fill="#2ab1ee"/><circle cx="19" cy="19" r="8" fill="#2ab1ee"/><circle cx="14" cy="14" r="12" fill="#2ab1ee"/><circle cx="14" cy="14" r="10.500" fill="#fff"/><text x="8.500" y="21" font-size="19" font-weight="700" fill="#12a5ea">S</text><circle cx="23.500" cy="24" r="7" fill="#6aa516" stroke="#fff" stroke-width="1.200"/><path d="M20.500 24l2.300 2.300 4-4.300" fill="none" stroke="#fff" stroke-width="1.800"/></svg></div>
    <div class="tk run"><svg width="28" height="18" viewBox="0 0 28 18"><rect x="1" y="1" width="15" height="12" rx="4.500" fill="#ff8a12"/><rect x="12.500" y="6" width="14.500" height="11" rx="4" fill="#6edc10"/></svg></div>
    <div class="tk run"><svg width="28" height="27" viewBox="0 0 28 27"><path d="M15 6h12v16H15z" fill="#fff"/><path d="M16 7l5.500 6L27 6.500" fill="none" stroke="#0a72c6" stroke-width="2"/><path d="M0 3l16-3v27L0 24z" fill="#0a72c6"/><ellipse cx="8" cy="13.500" rx="3.500" ry="4.500" fill="none" stroke="#fff" stroke-width="2.200"/></svg></div>
    <div class="tk run"><svg width="30" height="30" viewBox="0 0 30 30"><path d="M4 1l9-1 4 6-12 20-4-6 2-8-2-5z" fill="#f7304e"/><path d="M1 12l6 2-1 6-4-1z" fill="#fb9a2c"/><path d="M3 27l6-8 8 7-4 3z" fill="#a44bb0"/><path d="M16 5l7-5 7 7-3 19-9 4-7-5z" fill="#1f6fe8"/><path d="M5 5.500h20v20H5z" fill="#0c0c0c"/><text class="mono" x="7" y="16" font-size="12" font-weight="700" fill="#fff">IJ</text><path d="M8 22h7" stroke="#fff" stroke-width="1.500"/></svg></div>
    <div class="tk run act"><svg width="28" height="27" viewBox="0 0 28 27"><path d="M14 4.500h13v18H14z" fill="#fff" stroke="#d24726"/><circle cx="19.500" cy="10" r="3.500" fill="#d24726"/><path d="M20 6v4h4M16 16h9M16 19.500h9" stroke="#d24726" stroke-width="1.500" fill="none"/><path d="M0 3l16-3v27L0 24z" fill="#d24726"/><text x="4" y="19" font-size="15" font-weight="700" fill="#fff">P</text></svg></div>
    <div class="tk run"><svg width="29" height="29" viewBox="0 0 29 29"><rect width="29" height="29" rx="2.500" fill="#2a6585"/><path d="M0 14L29 5v24H0z" fill="#215474"/><path d="M4 5q7-3 12 7 3 7 9 9l-3 1 3 3M4 5q1 8 5 13l1-2 2 3" fill="none" stroke="#bcd5e2" stroke-width="1.300"/><path d="M20 3l5 5M19 6l3-3M24 9l3-3" stroke="#fff" stroke-width="1.500"/></svg></div>
    <div class="tk run"><svg width="30" height="30" viewBox="0 0 30 30"><circle cx="15" cy="15" r="14.300" fill="#ff6c37" stroke="#fff" stroke-width="1.400"/><circle cx="22.500" cy="8" r="3" fill="#fde6dc"/><path d="M8 22l3-5 8-8 3 3-8 7z" fill="#fde6dc"/><path d="M8 22L19 11" stroke="#ff6c37"/></svg></div>
    <div class="tray">
      <svg width="17" height="12" viewBox="0 0 17 12"><path d="M1 10.500l7.500-8.500 7.500 8.500" fill="none" stroke="#fff" stroke-width="1.400"/></svg>
      <svg width="21" height="16" viewBox="0 0 21 16"><path d="M5 4h14v9H3V9" fill="none" stroke="#fff" stroke-width="1.200"/><path d="M5 5.500h12.500v6H5zM19 6h1.500v4H19z" fill="#fff"/><path d="M1 0v3M4 0v3M0 3h5v3H0zM2.500 6v5" stroke="#fff" fill="#fff"/></svg>
      <svg width="16" height="16" viewBox="0 0 16 16"><path d="M1 15Q1 2 15 1M4.500 15Q5 6 15 4.500M8 15q1-6 7-7M11.500 15q.5-3 3.500-3.500" fill="none" stroke="#bbb" stroke-width="1.300"/><circle cx="14" cy="14" r="1.500" fill="#fff"/></svg>
      <svg width="22" height="18" viewBox="0 0 22 18"><path d="M.7 6H3l4-4v14l-4-4H.7z" fill="none" stroke="#fff" stroke-width="1.200"/><path d="M10 6.500q2 2.500 0 5" fill="none" stroke="#fff"/><path d="M13 4.500q4 4.500 0 9M16 2q6 7 0 14" fill="none" stroke="#888"/></svg>
      <div class="clock"><span>7:35 PM</span><span>5/6/2019</span></div>
      <svg width="32" height="32" viewBox="0 0 32 32"><path d="M0 2h20v15h-6l-5 5v-5H0z" fill="#fff"/><path d="M4 6.500h13M4 10h13M4 13.500h8" stroke="#262626"/><circle cx="19.500" cy="21" r="9.800" fill="#2f2f2f" stroke="#8a8a8a"/><text x="15.500" y="26" font-size="14" font-weight="600" fill="#fff">2</text></svg>
      <i class="desk"></i>
    </div>
  </footer>
</div>
</body>
</html>
```

FILE: styles.css
```css
* { box-sizing: border-box; }
body { margin: 0; overflow: hidden; background: #e6e6e6; font: 14px/20px "Open Sans", "Noto Sans", sans-serif; letter-spacing: -0.1px; color: #444; }
svg { display: block; flex: none; }
svg text { font-family: "Open Sans", sans-serif; letter-spacing: 0; }
.defs { position: absolute; }
.app { width: 1920px; height: 1080px; display: flex; flex-direction: column; }

/* title bar and tabs */
.top { position: relative; height: 71px; background: #b7472a; color: #fff; }
.circuit { position: absolute; right: 0; top: 0; }
.titlebar { position: relative; height: 41px; display: grid; grid-template-columns: 850px 861px 1fr; align-items: center; padding-bottom: 3px; }
.qat { display: grid; grid-template-columns: 36px 25px 19px 36px 43px 10px; align-items: center; padding-left: 27px; }
.doc-title { letter-spacing: 0.03px; padding-top: 3px; }
.winbtns { display: grid; grid-template-columns: 59px 57px 58px 20px; align-items: center; }
.tabs { position: relative; height: 30px; display: grid; grid-template-columns: 77px 68px 81px 74.500px 99px 104.500px 101px 77px 62px 19px 968px 98px 75px; align-items: center; letter-spacing: -0.1px; line-height: 30px; }
.tabs > span { height: 30px; white-space: nowrap; }
.tabs .file { padding-left: 25px; padding-top: 1px; letter-spacing: 0; }
.tabs .tab-on { background: #f1f1f1; color: #d24726; text-align: center; letter-spacing: -0.1px; }
.tabs .tab-on + span { padding-left: 15px; }
.tabs .tell { color: #f5d9d0; letter-spacing: 0.1px; }
.tabs .user { letter-spacing: 0.05px; }
.tabs .share { background: #8f3820; display: flex; align-items: center; gap: 4px; padding-left: 7px; padding-top: 1px; }

/* ribbon */
.ribbon { height: 112px; background: #f1f1f1; border-bottom: 1px solid #c8c8c8; display: flex; padding-top: 4px; }
.group { height: 104px; border-right: 1px solid #d2d2d2; }
.body { height: 90px; display: flex; }
.rows { flex-direction: column; }
.cap { height: 14px; font-size: 13px; line-height: 14px; letter-spacing: -0.2px; color: #666; display: flex; justify-content: space-between; align-items: center; padding-right: 6px; }
.ln { width: 8px; height: 8px; color: #888; }
.off .ln, .pale-ln { color: #b8b8b8; }
.g-clip { width: 188px; } .g-clip .cap { padding-left: 55px; }
.g-slides { width: 151px; } .g-slides .cap { padding-left: 58px; }
.g-font { width: 263px; } .g-font .cap { padding-left: 108px; }
.g-para { width: 370px; } .g-para .cap { padding-left: 144px; }
.g-draw { width: 422px; } .g-draw .cap { padding-left: 176px; }
.g-edit { width: 109px; } .g-edit .cap { padding-left: 34px; }
.off { color: #a3a3a3; fill: #a3a3a3; }
.caret { width: 0; height: 0; border: 3.500px solid transparent; border-top: 4px solid #777; border-bottom: 0; }
.off .caret { border-top-color: #b5b5b5; }
.caret.pale { border-top-color: #d27c64; }
.m4 { margin-left: 4px; } .m10 { margin-left: 10px; }
.list { margin-top: -1px; }
.list > div { height: 28px; display: grid; grid-template-columns: 23px auto auto; justify-content: start; align-items: center; white-space: nowrap; }
.list.l27 > div { height: 27px; }
.off .list > div, .g-edit .list > div { letter-spacing: 0.05px; }
.big { display: flex; flex-direction: column; align-items: center; }
.big > span { height: 20px; white-space: nowrap; }
.ln2 { display: flex; align-items: center; gap: 4px; }
.b-paste { width: 58px; padding-top: 4px; } .b-paste > span { margin-top: 2px; letter-spacing: -0.3px; } .b-paste > .caret { margin-top: 7px; }
.b-new { width: 57px; padding-top: 2px; } .b-new > svg { margin-left: 2px; } .b-new > span { margin-top: 8px; } .b-new > .ln2 { margin-top: 0; }
.rows { display: flex; padding-top: 9px; gap: 9px; }
.rows > div { height: 28px; display: grid; align-items: center; }
.frow1 { grid-template-columns: 112px 63px 26px 23px 11px 20px; padding-left: 4px; }
.frow2 { grid-template-columns: 27px 24px 28px 21px 27px 22px 17px 22px 15px 12px 22px 8px; padding-left: 11px; }
.vr { width: 1px; height: 22px; background: #d0d0d0; }
.combo { height: 27px; width: 112px; border: 1px solid #c6c6c6; display: flex; background: #fefefe; }
.combo + .combo { width: 56px; }
.combo b { flex: 1; font-weight: 400; font-size: 14px; line-height: 26px; padding-left: 4px; }
.combo em { width: 15px; background: #e6e6e6; display: flex; align-items: center; justify-content: center; }
.fb, .fu, .fs { font-weight: 700; font-size: 15px; } .fu { text-decoration: underline; text-underline-offset: 2px; }
.fi { font: italic 700 17px "Liberation Serif", serif; }
.fs { font-size: 17px; text-shadow: 2px 1px 1px #ccc; }
.fx { text-decoration: line-through; font-size: 12.500px; letter-spacing: -0.4px; }
.fa { font-size: 17px; font-weight: 600; margin-top: -5px; }
.p-left { width: 193px; }
.prow1 { grid-template-columns: 25px 14px 25px 14px 8px 27px 26px 8px 24px 8px; padding-left: 8px; }
.prow2 { grid-template-columns: 25px 27px 25px 25px 8px 24px 8px; padding-left: 10px; }
.gallery { width: 164px; height: 77px; margin: 2px 0 0 5px; border: 1px solid #ababab; background: #fff; display: flex; }
.gallery svg { margin-right: -1px; }
.gscroll { width: 17px; display: flex; flex-direction: column; border-left: 1px solid #c6c6c6; background: #fff; }
.gscroll i { flex: 1; display: flex; flex-direction: column; align-items: center; justify-content: center; gap: 2px; }
.gscroll i + i { border-top: 1px solid #c6c6c6; }
.gscroll i:first-child { background: #e6e6e6; }
.gscroll s { width: 7px; height: 1px; background: #666; }
u.up, u.dn { width: 0; height: 0; border: 3px solid transparent; }
u.up { border-top: 0; border-bottom: 3px solid #666; } u.dn { border-bottom: 0; border-top: 3px solid #666; }
u.pale2 { border-bottom-color: #bbb; }
.b-arr { width: 64px; padding-top: 3px; } .b-arr > span { margin-top: 5px; } .b-arr > .caret { margin-top: 7px; }
.b-quick { width: 48px; padding-top: 5px; } .b-quick > span { margin-top: 2px; } .b-quick > .ln2 { margin-top: 0; }
.g-draw .list { margin-left: 6px; } .g-draw .list > div { grid-template-columns: 22px auto auto; letter-spacing: 0; }
.g-edit .list { margin-left: 8px; } .g-edit .list > div { grid-template-columns: 22px auto auto; }
.collapse { margin: 93px 0 0 auto; margin-right: 10px; }

/* workspace */
.work { height: 820px; display: flex; }
.pane { width: 299px; display: flex; overflow: hidden; border-right: 1px solid #ababab; }
.thumbs { list-style: none; margin: -75px 0 0; padding: 0; width: 275px; display: flex; flex-direction: column; gap: 23px; }
.thumbs li { height: 123px; flex: none; display: flex; }
.thumbs li > span { width: 25px; margin-right: 8px; text-align: right; font-size: 19px; line-height: 26px; margin-top: -6px; letter-spacing: -0.8px; }
.thumbs svg { width: 216px; height: 123px; background: #fff; outline: 1px solid #bdbdc4; outline-offset: -1px; }
.thumbs svg > text { font-family: "Liberation Serif", serif; font-size: 4.200px; fill: #333; }
.thumbs svg .pg { fill: #e3ddd1; }
.thumbs svg .bd { font-weight: 700; fill: #000; }
.thumbs svg .hl { fill: #f0882c; text-decoration: underline; }
.sel > span { color: #d24726; }
.thumbs .sel svg { outline: 3px solid #d24726; outline-offset: -1px; }
svg .dg text { font-family: "Liberation Sans", sans-serif; font-weight: 700; font-style: italic; }
.mono { font-family: "Liberation Mono", monospace; }
.sbar { width: 20px; display: flex; flex-direction: column; padding: 2px 0; }
.pane .sbar { height: 820px; }
.sbar b { height: 19px; width: 19px; background: #fff; border: 1px solid #c6c6c6; display: flex; align-items: center; justify-content: center; }
.sbar u.up { border-width: 0 5px 5px; } .sbar u.dn { border-width: 5px 5px 0; }
.track { flex: 1; width: 19px; background: #dadada; }
.track em { display: block; background: #fff; border: 1px solid #ababab; }
.t-left { padding-top: 199px; } .t-left em { height: 197px; }
.right { flex: 1; display: flex; flex-direction: column; }
.stage { height: 774px; display: flex; }
.slide { width: 1322px; height: 745px; margin: 13px 0 0 140px; background: #fff; border: 1px solid #c3c3c3; padding: 26px 25px; }
.page { width: 1270px; height: 691px; background: #e3ddd1; color: #000; }
.page ul { list-style: none; margin: 0; padding: 31px 0 0 104px; font: 24.750px/29.700px "Liberation Serif", serif; letter-spacing: 0; height: 256px; white-space: nowrap; }
.page li::before { content: ""; box-sizing: border-box; display: inline-block; width: 7px; height: 8px; border: 1.200px solid #333; border-radius: 50%; margin: 0 13px 4px -20px; }
.p2 { margin-top: 54px; }
.wavy { text-decoration: underline wavy #e8324a 1px; text-underline-offset: 1px; }
.figure { margin-left: 296px; }
.vscroll { margin-left: auto; width: 21px; display: flex; flex-direction: column; align-items: center; }
.vscroll .sbar { height: 708px; }
.vscroll > svg { margin-top: 3px; margin-bottom: 7px; }
.t-main { padding-top: 272px; } .t-main em { height: 30px; }
.notes { flex: 1; border-top: 1px solid #b5b5b5; padding: 9px 0 0 14px; font-size: 17.600px; letter-spacing: 0; color: #555; }

/* status bar */
.status { height: 27px; background: #f1f1f1; border-top: 1px solid #c0c0c0; display: grid; grid-template-columns: 99px 1235px 19px 56px 20px 82px 54px 41px 41px 33px 13px 129px 27px 41px 20px; padding-left: 8px; align-items: center; font-size: 13px; letter-spacing: -0.1px; color: #555; }
.status > span { line-height: 22px; margin-top: -2px; }
.status > svg { margin-top: -1px; }
.view-on { width: 41px; height: 26px; background: #c8c8c8; display: flex; align-items: center; justify-content: center; }
.s-z, .s-com { letter-spacing: -0.5px; }

/* taskbar */
.taskbar { height: 50px; background: #262626; display: flex; color: #fff; }
.tk { width: 62px; height: 50px; padding: 0 5px; display: flex; flex-direction: column; align-items: center; justify-content: center; }
.tk.w60 { width: 60px; } .tk.w63 { width: 63px; padding-right: 8px; }
.nudge { margin-left: 2px; }
.run { border: solid transparent; border-width: 0 5px; padding: 0; background: linear-gradient(#86b7e2, #86b7e2) left bottom / 100% 3px no-repeat content-box; background-clip: padding-box; }
.two { background: linear-gradient(90deg, #86b7e2 78%, #5c7f9f 78%) left bottom / 100% 3px no-repeat; background-clip: padding-box; }
.act { border: 0; background-color: #515151; }
.tray { margin-left: auto; width: 263px; display: grid; grid-template-columns: 28px 33px 26px 34px 91px 44px 6px; align-items: center; }
.clock { display: flex; flex-direction: column; align-items: center; gap: 3px; line-height: 20px; letter-spacing: -0.2px; padding-right: 3px; margin-top: -1px; }
.desk { height: 50px; width: 1px; background: #666; }
```
